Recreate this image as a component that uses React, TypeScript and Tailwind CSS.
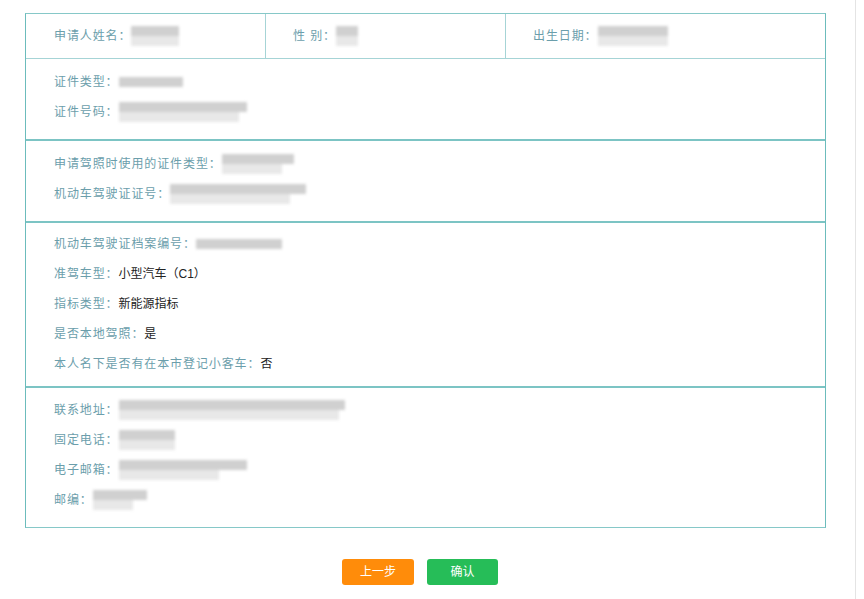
import React from "react";

type Field = { label: string; value?: string; blur?: number[] };

function Blur({ widths }: { widths: number[] }) {
  return (
    <span className="inline-flex flex-col gap-0 align-middle blur-[1.5px]">
      {widths.map((w, i) => (
        <span
          key={i}
          className={`block h-[10px] ${i === 0 ? "bg-[#d0d0d0]" : "bg-[#e8e8e8]"}`}
          style={{ width: w }}
        />
      ))}
    </span>
  );
}

function Label({ children }: { children: React.ReactNode }) {
  return <span className="text-[#6b9eab] tracking-[0.9px]">{children}</span>;
}

function Line({ field }: { field: Field }) {
  return (
    <div className="flex items-center h-[30px]">
      <Label>{field.label}</Label>
      {field.value && <span className="text-[#222]">{field.value}</span>}
      {field.blur && <Blur widths={field.blur} />}
    </div>
  );
}

const sections: { fields: Field[]; pad: string }[] = [
  {
    pad: "pt-[8px] pb-[12px]",
    fields: [
      { label: "证件类型：", blur: [64] },
      { label: "证件号码：", blur: [128, 120] },
    ],
  },
  {
    pad: "pt-[8px] pb-[12px]",
    fields: [
      { label: "申请驾照时使用的证件类型：", blur: [72, 60] },
      { label: "机动车驾驶证证号：", blur: [136, 120] },
    ],
  },
  {
    pad: "pt-[6px] pb-[7px]",
    fields: [
      { label: "机动车驾驶证档案编号：", blur: [86] },
      { label: "准驾车型：", value: "小型汽车（C1）" },
      { label: "指标类型：", value: "新能源指标" },
      { label: "是否本地驾照：", value: "是" },
      { label: "本人名下是否有在本市登记小客车：", value: "否" },
    ],
  },
  {
    pad: "pt-[7px] pb-[12px]",
    fields: [
      { label: "联系地址：", blur: [226, 220] },
      { label: "固定电话：", blur: [56, 56] },
      { label: "电子邮箱：", blur: [128, 100] },
      { label: "邮编：", blur: [54, 40] },
    ],
  },
];

export default function App() {
  return (
    <div className="w-[864px] h-[599px] bg-white overflow-hidden font-['Liberation_Sans','Noto_Sans_CJK_SC',sans-serif] text-[12px]">
      <div className="w-[856px] h-full border-r border-[#e4e4e4] pt-[13px] pl-[25px]">
        <div className="w-[801px] border border-[#86c8c8] border-l-[#6cbcbc] border-r-[#6cbcbc]">
          <div className="grid grid-cols-[240px_240px_1fr] h-[45px] border-b border-[#a6d4d6]">
            <div className="flex items-center pl-[28px] border-r border-[#a6d4d6]">
              <Label>申请人姓名：</Label>
              <Blur widths={[48, 48]} />
            </div>
            <div className="flex items-center pl-[27px] border-r border-[#a6d4d6]">
              <Label>性 别：</Label>
              <Blur widths={[22, 22]} />
            </div>
            <div className="flex items-center pl-[27px]">
              <Label>出生日期：</Label>
              <Blur widths={[70, 70]} />
            </div>
          </div>
          {sections.map((s, i) => (
            <div
              key={i}
              className={`pl-[28px] ${s.pad} ${i < sections.length - 1 ? "border-b-2 border-[#7cc4c4]" : ""}`}
            >
              {s.fields.map((f) => (
                <Line key={f.label} field={f} />
              ))}
            </div>
          ))}
        </div>
        <div className="flex justify-center gap-[13px] mt-[31px] w-[801px] pr-[11px]">
          <button className="w-[72px] h-[26px] rounded-[3px] bg-[#ff8c0a] text-white text-[12px]">
            上一步
          </button>
          <button className="w-[71px] h-[26px] rounded-[3px] bg-[#26bd58] text-white text-[12px]">
            确认
          </button>
        </div>
      </div>
    </div>
  );
}
